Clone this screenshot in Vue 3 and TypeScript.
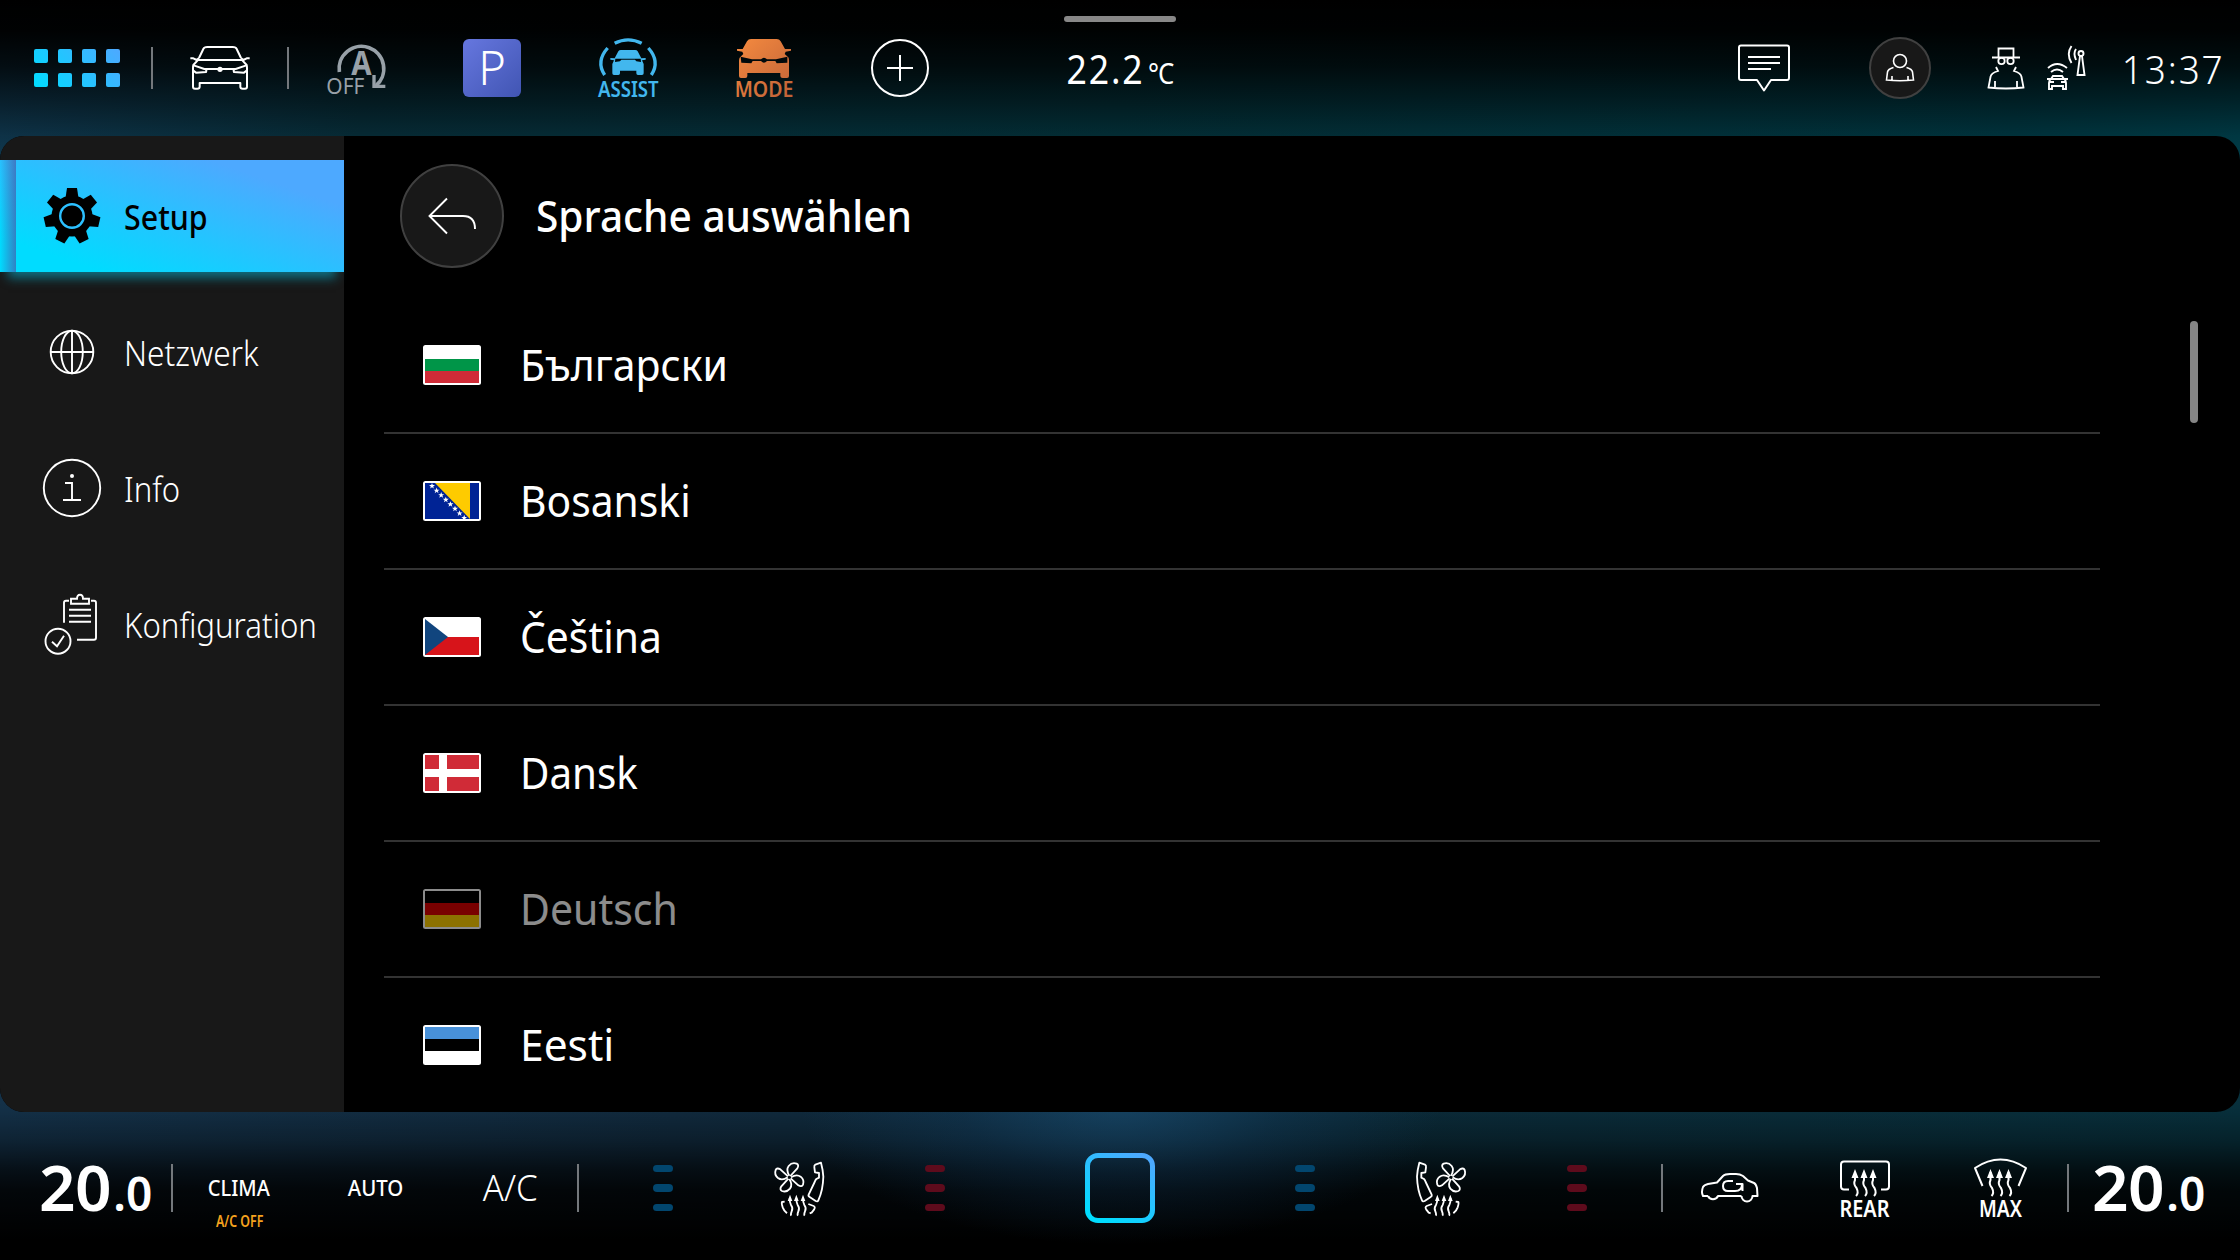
<script setup lang="ts">
interface NavItem { id: string; label: string; fit: number; active?: boolean }
interface Language { id: string; name: string; fit: number; disabled?: boolean }

// `fit` condenses a label horizontally
const nav: NavItem[] = [
  { id: 'setup', label: 'Setup', fit: 0.893, active: true },
  { id: 'network', label: 'Netzwerk', fit: 0.93 },
  { id: 'info', label: 'Info', fit: 0.915 },
  { id: 'config', label: 'Konfiguration', fit: 0.918 },
]

const languages: Language[] = [
  { id: 'bg', name: 'Български', fit: 0.932 },
  { id: 'bs', name: 'Bosanski', fit: 0.927 },
  { id: 'cs', name: 'Čeština', fit: 0.928 },
  { id: 'da', name: 'Dansk', fit: 0.917 },
  { id: 'de', name: 'Deutsch', fit: 0.932, disabled: true },
  { id: 'et', name: 'Eesti', fit: 0.966 },
]

const stripes: Record<string, string[]> = {
  bg: ['#ffffff', '#009548', '#d02b37'],
  de: ['#000000', '#dd0000', '#ffce00'],
  et: ['#4891d9', '#000000', '#ffffff'],
}

const stars = Array.from({ length: 8 }, (_, i) => ({ x: 7 + i * 4.6, y: 3 + i * 4.55 }))
const tiles = [0, 1, 2, 3].flatMap((c) => [0, 1].map((r) => ({ x: c * 24, y: r * 24 })))
const teeth = [0, 1, 2, 3, 4, 5, 6].map((i) => (i * 360) / 7)
</script>

<template>
  <div class="screen">
    <header class="top">
      <div class="cell first">
        <svg width="86" height="38" viewBox="0 0 86 38">
          <defs>
            <linearGradient id="tileFill" gradientUnits="userSpaceOnUse" x1="10" y1="48" x2="76" y2="-10">
              <stop offset="0" stop-color="#00dcff" /><stop offset="1" stop-color="#4da9ff" />
            </linearGradient>
          </defs>
          <rect v-for="(t, i) in tiles" :key="i" :x="t.x" :y="t.y" width="14" height="14" rx="2" fill="url(#tileFill)" />
        </svg>
      </div>
      <i class="rule" />
      <div class="cell">
        <svg width="62" height="46" viewBox="567 135 186 138" fill="none" stroke="#fff" stroke-width="6" stroke-linejoin="round">
          <path d="M597 174L610 147Q612 141 622 141H698Q708 141 710 147L723 174" />
          <path d="M590 180H730M571 175H580L590 180L597 174M749 175H740L730 180L723 174" />
          <path d="M593 181L580 195Q579 199 579 205V260Q579 266 585 266H592Q599 266 599 260V249H721V260Q721 266 728 266H735Q741 266 741 260V205Q741 199 740 195L727 181" />
          <path d="M581 196L613 207H707L739 196M615 207Q621 210 618 216L588 218L580 212M705 207Q699 210 702 216L732 218L740 212" />
          <circle cx="660" cy="208" r="8" fill="#fff" stroke="none" />
        </svg>
      </div>
      <i class="rule" />
      <div class="cell">
        <svg width="60" height="54" viewBox="978 120 180 162">
          <g fill="none" stroke="#98a1a8" stroke-width="11">
            <path d="M1018 213A67 67 0 1 1 1128 254" />
            <path d="M1122 222V256H1156" stroke-width="10" />
          </g>
          <text class="glyph bold" x="1054" y="222" font-size="101" textLength="61" lengthAdjust="spacingAndGlyphs" fill="#98a1a8">A</text>
          <text class="glyph" x="979" y="279" font-size="66" textLength="114" lengthAdjust="spacingAndGlyphs" fill="#98a1a8">OFF</text>
        </svg>
      </div>
      <div class="cell"><div class="park">P</div></div>
      <div class="cell">
        <svg width="62" height="60" viewBox="471 114 186 180" fill="#42b7ee">
          <g fill="none" stroke="#42b7ee" stroke-width="10">
            <path d="M524 130Q564 109 605 130M503 144Q467 184 494 225M625 144Q661 184 634 225" />
          </g>
          <path fill-rule="evenodd" d="M511 174L524 175L535 154Q537 150 543 150H585Q591 150 593 154L604 175L617 174V179L606 181L611 192V220Q611 225 606 225H594Q589 225 589 220V212H540V220Q540 225 535 225H522Q517 225 517 220V192L522 181L511 179ZM526 176L525 186L540 184L544 179H585L589 184L603 186L602 176Z" />
          <text class="glyph semi" x="474" y="291" font-size="67" textLength="182" lengthAdjust="spacingAndGlyphs">ASSIST</text>
        </svg>
      </div>
      <div class="cell">
        <svg width="60" height="60" viewBox="882 114 180 180" fill="url(#modeFill)">
          <defs>
            <linearGradient id="modeFill" gradientUnits="userSpaceOnUse" x1="892" y1="117" x2="1056" y2="291">
              <stop offset="0" stop-color="#f58a3f" /><stop offset="1" stop-color="#bf6238" />
            </linearGradient>
          </defs>
          <path fill-rule="evenodd" d="M891 147H908L921 124Q925 117 933 117H1010Q1018 117 1022 124L1035 147H1053V152L1037 155L1034 162L1045 172Q1047 176 1047 182V228Q1047 234 1041 234H1028Q1021 234 1021 228V219H922V228Q922 234 916 234H903Q897 234 897 228V182Q897 176 900 172L910 162L907 155L891 152ZM902 170L936 178H963Q972 168 981 178H1008L1042 170V188L1010 190L1006 183H981Q972 194 963 183H938L934 190L904 188Z" />
          <text class="glyph semi" x="884" y="291" font-size="67" textLength="176" lengthAdjust="spacingAndGlyphs">MODE</text>
        </svg>
      </div>
      <div class="cell">
        <svg width="60" height="60" viewBox="-30 -30 60 60" fill="none" stroke="#fff" stroke-width="2">
          <circle r="28" /><path d="M-13 0H13M0 -13V13" />
        </svg>
      </div>
      <div class="outside">
        <i class="handle" />
        <div class="outside-temp"><span class="deg">22.2</span><span class="unit">°C</span></div>
      </div>
      <div class="status">
        <div class="cell">
          <svg width="54" height="48" viewBox="0 0 54 48" fill="none" stroke="#fff" stroke-width="2" stroke-linejoin="round">
            <path d="M4 1.500H50Q52 1.500 52 3.500V34Q52 36 50 36H34L27 46.500L20 36H4Q2 36 2 34V3.500Q2 1.500 4 1.500Z" /><path d="M11 13H43M11 19H43M11 25H34" />
          </svg>
        </div>
        <div class="cell">
          <div class="avatar">
            <svg width="30" height="30" viewBox="0 0 30 30" fill="none" stroke="#fff" stroke-width="1.600">
              <circle cx="15" cy="8" r="6.500" /><path d="M8.500 14.500Q3 16 2.500 19L1.500 27Q15 28.500 28.500 27L27.500 19Q27 16 21.500 14.500M7 27V23M23 27V23" />
            </svg>
          </div>
        </div>
        <svg class="incognito" width="38" height="44" viewBox="0 0 38 44" fill="none" stroke="#fff" stroke-width="1.800">
          <path d="M5 11.500H33M11.500 11V2.500H26.500V11" /><circle cx="14.500" cy="15" r="3.200" /><circle cx="23.500" cy="15" r="3.200" />
          <path d="M9 21L11 25Q4 27 3.500 31L1.500 41.500Q19 43.500 36.500 41.500L34.500 31Q34 27 27 25L29 21M8 41V35M30 41V35" />
        </svg>
        <svg class="antenna" width="40" height="46" viewBox="0 0 40 46" fill="none" stroke="#fff" stroke-width="1.900">
          <path d="M2 23Q11 15 21 23M5 27Q11 22 17 27M3 44V38Q3 35 5 34L7 31H16L18 34Q20 35 20 38V44H17V41H6V44ZM1 34H22M4 37H8M15 37H19M34 11L31.500 30H38.500L36 11M30 4Q27 8 30 15M25.500 1Q20 9 25.500 18" />
          <circle cx="35" cy="8.500" r="2.500" />
        </svg>
        <div class="clock">13:37</div>
      </div>
    </header>

    <main class="panel">
      <nav class="side">
        <div v-for="n in nav" :key="n.id" class="item" :class="{ active: n.active }">
          <div class="item-icon">
            <svg v-if="n.id === 'setup'" width="58" height="58" viewBox="-29 -29 58 58">
              <path v-for="a in teeth" :key="a" d="M-6.500 -18L-5 -28H5L6.500 -18Z" :transform="`rotate(${a})`" />
              <circle r="20.500" /><circle r="11.800" fill="none" stroke="#2cc0ff" stroke-width="2.400" />
            </svg>
            <svg v-else-if="n.id === 'network'" width="46" height="46" viewBox="-23 -23 46 46" fill="none" stroke="#fff" stroke-width="1.900">
              <circle r="21.300" /><ellipse rx="10.800" ry="21.300" /><path d="M-21 0H21M0 -21V21" />
            </svg>
            <svg v-else-if="n.id === 'info'" width="60" height="60" viewBox="-30 -30 60 60" fill="none" stroke="#fff" stroke-width="1.900">
              <circle r="28.200" /><path d="M-7 -5H0V12M-9 12H9" /><circle cy="-12" r="2" fill="#fff" stroke="none" />
            </svg>
            <svg v-else width="56" height="62" viewBox="0 -0.700 56 62" fill="none" stroke="#fff" stroke-width="1.900">
              <path d="M20 29V9Q20 7 22 7H25M47 7H50Q52 7 52 9V44Q52 46 50 46H33M27 5H33Q33 1 36 1Q39 1 39 5H45V10H27ZM25 16H47M25 22H47M25 28H47" />
              <circle cx="14" cy="47.500" r="12.500" /><path d="M8 48L13 52.500L20 42" />
            </svg>
          </div>
          <span class="fit item-label" :style="{ '--fit': n.fit }">{{ n.label }}</span>
        </div>
      </nav>

      <section class="content">
        <div class="head">
          <button class="back">
            <svg width="50" height="38" viewBox="0 0 50 38" fill="none" stroke="#fff" stroke-width="1.900">
              <path d="M20 1.500L2.500 19L20 36.500M2.500 19H36Q48 19 48 32" />
            </svg>
          </button>
          <h1 class="fit">Sprache auswählen</h1>
        </div>
        <div class="body">
          <ul class="list">
            <li v-for="l in languages" :key="l.id" :class="{ disabled: l.disabled }">
              <svg class="flag" width="58" height="40" viewBox="-2 -2 58 40">
                <rect x="-2" y="-2" width="58" height="40" rx="2.500" fill="#fff" />
                <template v-if="stripes[l.id]">
                  <rect v-for="(c, i) in stripes[l.id]" :key="i" :y="i * 12" width="54" height="12" :fill="c" />
                </template>
                <template v-else-if="l.id === 'bs'">
                  <rect width="54" height="36" fill="#002395" /><path d="M10 0H45V36Z" fill="#fecb00" />
                  <path v-for="(s, i) in stars" :key="i" d="M0 -3L.8 -.9L3 -.9L1.200 .5L1.900 2.600L0 1.300L-1.900 2.600L-1.200 .5L-3 -.9L-.8 -.9Z" fill="#fff" :transform="`translate(${s.x} ${s.y})`" />
                </template>
                <template v-else-if="l.id === 'cs'">
                  <rect y="18" width="54" height="18" fill="#d7141a" /><path d="M0 0L23 18L0 36Z" fill="#11457e" />
                </template>
                <template v-else>
                  <rect width="54" height="36" fill="#d02b37" /><path d="M14 0H22V14H54V22H22V36H14V22H0V14H14Z" fill="#fff" />
                </template>
              </svg>
              <span class="fit" :style="{ '--fit': l.fit }">{{ l.name }}</span>
            </li>
          </ul>
          <i class="scroll" />
        </div>
      </section>
    </main>

    <footer class="bottom">
      <div class="temp left"><b>20</b><small>.0</small></div>
      <i class="rule tall" />
      <div class="trio">
        <div class="cell clima"><span class="caps narrow">CLIMA</span><span class="warn">A/C OFF</span></div>
        <div class="cell"><span class="caps auto">AUTO</span></div>
        <div class="cell"><span class="ac">A/C</span></div>
      </div>
      <i class="rule tall" />
      <div class="seat-group">
        <div class="cell level cold"><i /><i /><i /></div>
        <div class="cell">
          <svg class="flip" width="52" height="58" viewBox="588 207 156 174" fill="none" stroke="#fff" stroke-width="5.500" stroke-linejoin="round"><use href="#seat" /></svg>
        </div>
        <div class="cell level hot"><i /><i /><i /></div>
      </div>
      <div class="home">
        <svg width="70" height="70" viewBox="0 0 70 70">
          <defs>
            <linearGradient id="homeStroke" x1="0.250" y1="1" x2="0.850" y2="0">
              <stop offset="0" stop-color="#00dcff" /><stop offset="1" stop-color="#4da9ff" />
            </linearGradient>
          </defs>
          <rect x="2.500" y="2.500" width="65" height="65" rx="10.500" fill="none" stroke="url(#homeStroke)" stroke-width="5" />
        </svg>
      </div>
      <div class="seat-group">
        <div class="cell level cold"><i /><i /><i /></div>
        <div class="cell">
          <svg width="52" height="58" viewBox="587 207 156 174" fill="none" stroke="#fff" stroke-width="5.500" stroke-linejoin="round">
            <g id="seat">
              <path d="M600 218L617 224Q621 226 620 232L618 247L606 249V263L614 267Q617 270 619 276L637 314Q639 318 634 321L616 333Q610 336 608 331Q594 300 593 260Q594 240 600 218Z" />
              <path v-for="a in [0, 90, 180, 270]" :key="a" :transform="`rotate(${a} 695 262)`" d="M692 258L671 235Q665 225 673 221Q687 216 697 228Q706 240 695 257" />
              <path d="M649 377Q652 374 648 364Q643 354 650 345Q654 338 654 325M669 377Q672 374 668 364Q663 354 670 345Q674 338 674 325M689 377Q692 374 688 364Q683 354 690 345Q694 338 694 325" />
              <path fill="#fff" stroke="none" d="M654 314L661 333H647ZM674 314L681 333H667ZM693 314L700 333H686Z" />
              <path d="M638 342L622 348Q616 351 621 359L628 368L634 370M709 335L717 336Q719 340 715 352Q711 363 702 370" />
            </g>
          </svg>
        </div>
        <div class="cell level hot"><i /><i /><i /></div>
      </div>
      <i class="rule tall" />
      <div class="trio">
        <div class="cell">
          <svg width="60" height="30" viewBox="0 1 60 30" fill="none" stroke="#fff" stroke-width="2" stroke-linejoin="round">
            <path d="M8 24H3Q1 20 3 15Q4 13 8 12L17 10.500L23 4Q25 2 30 2H36Q40 2 43 4L48 8.500L54 11Q56 12 57 16L57.500 24H52.500A5.500 5.500 0 0 1 41.500 24M41.500 24H18A5.500 5.500 0 0 1 8 24" />
            <path d="M33 9H28Q23 9 23 14Q23 19 28 19H35Q42 19 42 12M36 12H42.500V19" />
          </svg>
        </div>
        <div class="cell">
          <svg width="54" height="62" viewBox="0 0 54 62" fill="none" stroke="#fff" stroke-width="2">
            <path transform="translate(0 1.500)" d="M11 31H6Q3 31 3 28V6Q3 3 6 3H48Q51 3 51 6V28Q51 31 48 31H43" />
            <g id="heat" transform="translate(0 1)"><path d="M18 38Q21 35 18.500 30Q15 26 17 22L17 14M27 38Q30 35 27.500 30Q24 26 26 22V14M36 38Q39 35 36.500 30Q33 26 35 22V14" />
            <path fill="#fff" stroke="none" d="M17 11L20.500 20H13.500ZM26 11L29.500 20H22.500ZM35 11L38.500 20H31.500Z" /></g>
            <text class="glyph semi" x="1.500" y="60" font-size="22.500" textLength="50" lengthAdjust="spacingAndGlyphs" fill="#fff" stroke="none">REAR</text>
          </svg>
        </div>
        <div class="cell">
          <svg width="54" height="62" viewBox="-0.500 0 54 62" fill="none" stroke="#fff" stroke-width="2" stroke-linejoin="round">
            <path transform="translate(0 1)" d="M9 28L1.500 10Q27 -7 52.500 10L45 28" />
            <use href="#heat" />
            <text class="glyph semi" x="5.500" y="60" font-size="22.500" textLength="43" lengthAdjust="spacingAndGlyphs" fill="#fff" stroke="none">MAX</text>
          </svg>
        </div>
      </div>
      <i class="rule tall" />
      <div class="temp right"><b>20</b><small>.0</small></div>
    </footer>
  </div>
</template>

<style>
body { margin: 0; background: #000; }
</style>

<style scoped>
.screen { width: 2240px; height: 1260px; display: flex; flex-direction: column; overflow: hidden; color: #fff; font-family: "Noto Sans", "Open Sans", sans-serif;
  background:
    radial-gradient(ellipse 320px 140px at 1120px 1105px, rgba(30, 90, 135, .5), rgba(24, 75, 120, .24) 50%, transparent),
    linear-gradient(180deg, #000 0, rgba(0, 0, 0, .97) 30px, rgba(0, 0, 0, .78) 66px, rgba(0, 0, 0, .48) 100px, rgba(0, 0, 0, .14) 136px, transparent 170px, transparent 1085px, rgba(0, 0, 0, .1) 1112px, rgba(0, 0, 0, .33) 1140px, rgba(0, 0, 0, .7) 1170px, rgba(0, 0, 0, .87) 1190px, #000 1240px),
    linear-gradient(90deg, #103a52, #07303c 16%, #03333c 50%, #003944 90%, #00404c) top / 100% 50% no-repeat,
    linear-gradient(90deg, #15344d, #122d42 30%, #0c2d3c 60%, #083340) bottom / 100% 50% no-repeat; }
.screen * { box-sizing: border-box; }
svg { display: block; flex: none; overflow: visible; }
.fit { display: inline-block; transform: scaleX(var(--fit, .923)); transform-origin: left center; white-space: nowrap; }
.glyph { font-weight: 400; }
.glyph.semi { font-weight: 600; }
.glyph.bold { font-weight: 700; }
.top { height: 136px; display: flex; align-items: center; }
.cell { width: 136px; height: 100%; display: flex; align-items: center; justify-content: center; flex: none; }
.cell.first { width: 152px; padding-left: 2px; }
.rule { width: 2px; height: 42px; margin: 0 -1px; background: #74787c; flex: none; }
.rule.tall { height: 48px; }
.park { width: 58px; height: 58px; border-radius: 6px; background: linear-gradient(135deg, #6677df, #4155b3); font-size: 47px; line-height: 56px; text-align: center; font-weight: 300; }
.outside { width: 112px; height: 100%; margin-left: 96px; display: flex; flex-direction: column; align-items: center; padding-top: 16px; }
.handle { width: 112px; height: 6px; border-radius: 3px; background: #888; }
.outside-temp { display: flex; align-items: baseline; margin-top: 19px; line-height: 56px; white-space: nowrap; transform: scaleX(.89); }
.deg { font-size: 40px; letter-spacing: 2px; }
.unit { font-size: 29px; margin-left: 4px; letter-spacing: -1px; }
.status { margin-left: auto; width: 544px; height: 100%; display: flex; align-items: center; }
.avatar { width: 62px; height: 62px; border-radius: 50%; background: #181818; border: 2px solid #404040; display: flex; align-items: center; justify-content: center; }
.incognito { margin-left: 19px; }
.antenna { margin-left: 21px; }
.clock { margin-left: auto; margin-right: 15px; font-size: 39px; font-weight: 300; letter-spacing: 2px; transform: scaleX(.947); transform-origin: right center; }
.panel { height: 976px; display: flex; border-radius: 24px; overflow: hidden; background: #000; flex: none; }
.side { width: 344px; background: #181818; padding-top: 24px; display: flex; flex-direction: column; gap: 24px; flex: none; }
.item { height: 112px; display: flex; align-items: center; font-size: 34px; font-weight: 300; flex: none; }
.item-icon { width: 144px; display: flex; justify-content: center; margin-right: -20px; }
.item-label { padding-top: 2px; }
.item.active { color: #000; font-weight: 500; background: linear-gradient(90deg, rgba(70, 90, 170, 0), rgba(70, 90, 170, .7)) 0 0 / 16px 100% no-repeat, linear-gradient(19deg, #00dcff 15%, #4da9ff 80%); box-shadow: 0 14px 10px -8px rgba(10, 170, 200, .6); }
.content { flex: 1; display: flex; flex-direction: column; }
.head { height: 162px; flex: none; padding: 28px 0 0 56px; display: flex; align-items: flex-start; }
.back { width: 104px; height: 104px; border-radius: 50%; background: #181818; border: 2px solid #404040; padding: 0; display: flex; align-items: center; justify-content: center; }
h1 { margin: 0 0 0 32px; font-size: 44px; line-height: 102px; font-weight: 500; }
.body { display: flex; justify-content: space-between; padding: 0 42px 0 40px; }
.list { margin: 0; padding: 0; list-style: none; width: 1716px; }
.list li { height: 136px; display: flex; align-items: center; border-bottom: 2px solid #333; padding-left: 39px; font-size: 44px; }
.list li:last-child { border-bottom-color: transparent; }
.list li span { margin-left: 39px; padding-bottom: 3px; }
.disabled .flag, .disabled span { opacity: .55; }
.scroll { width: 8px; height: 102px; margin-top: 23px; border-radius: 4px; background: #858585; }
.bottom { height: 148px; display: flex; align-items: center; }
.bottom > * { transform: translateY(2px); }
.temp { width: 172px; display: flex; align-items: baseline; line-height: 88px; padding-top: 3px; }
.temp.left { padding-left: 39px; }
.temp.right { padding-left: 24px; }
.temp b { font-size: 64px; font-weight: 600; letter-spacing: -0.5px; }
.temp small { font-size: 46px; font-weight: 600; margin-left: 2px; }
.trio { display: flex; height: 100%; width: 406px; }
.trio .cell { flex: 1; width: auto; }
.caps { font-size: 22.5px; font-weight: 500; transform: scaleX(.907); margin-top: -2px; }
.caps.narrow { transform: translateX(-1px) scaleX(.89); }
.caps.auto { transform: translateX(1px) scaleX(.907); }
.clima { position: relative; }
.warn { position: absolute; bottom: 30px; font-size: 16.5px; font-weight: 600; color: #f5a21e; white-space: nowrap; transform: scaleX(.75); }
.ac { font-size: 37px; font-weight: 300; transform: scaleX(.94); margin-top: -4px; }
.seat-group { display: flex; height: 100%; align-items: center; margin: 0 17px; }
.home { flex: 1; display: flex; justify-content: center; }
.flip { transform: scaleX(-1); }
.level { flex-direction: column; gap: 12px; }
.level i { width: 20px; height: 7.500px; border-radius: 4px; }
.cold i { background: #02466e; }
.hot i { background: #5e0b1c; }
</style>
